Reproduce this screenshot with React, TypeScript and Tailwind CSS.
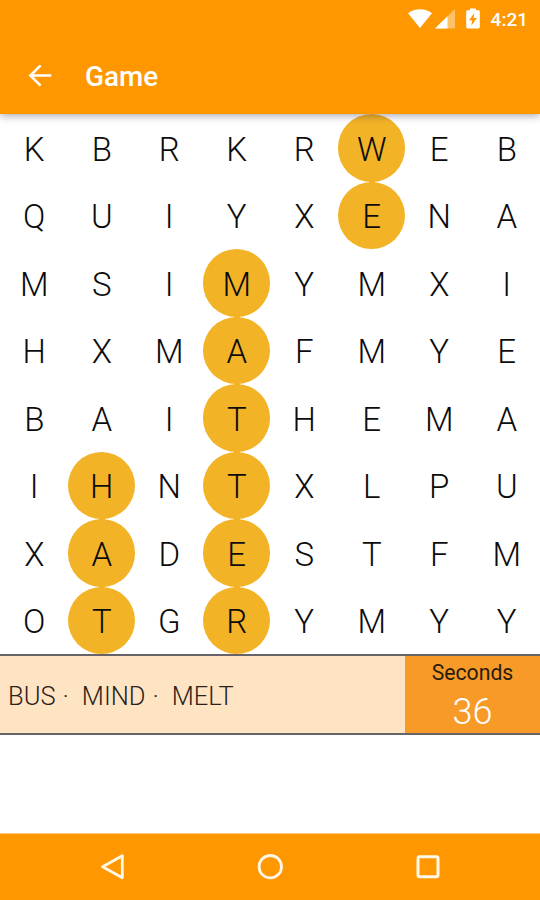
const ROWS = ['KBRKRWEB', 'QUIYXENA', 'MSIMYMXI', 'HXMAFMYE', 'BAITHEMA', 'IHNTXLPU', 'XADESTFM', 'OTGRYMYY'];

// "row,column" of every letter that belongs to a found word
const FOUND = new Set(['0,5', '1,5', '2,3', '3,3', '4,3', '5,3', '6,3', '7,3', '5,1', '6,1', '7,1']);

function StatusBar() {
  return (
    <div className="flex h-[37px] items-center justify-end pr-3 text-white">
      <svg width="73" height="24" viewBox="0 0 73 24" className="mr-[10px]" fill="currentColor">
        <path d="M0 6.2C3.5 3.6 7.5 2.2 12 2.2S20.5 3.6 24 6.2L12 21Z" />
        <path d="M47 2V21.4H27Z" opacity="0.4" />
        <path d="M39.5 9.3V21.4H27Z" />
        <path
          fillRule="evenodd"
          d="M62 1.4h6v1.8h2.5a1.3 1.3 0 0 1 1.3 1.3V20a1.4 1.4 0 0 1-1.4 1.4H59.6a1.4 1.4 0 0 1-1.4-1.4V4.5a1.3 1.3 0 0 1 1.3-1.3H62ZM66.4 6l-5.4 7.3h3.2l-.8 5.2 5.6-7.5h-3.4Z"
        />
      </svg>
      <span className="pt-[2px] text-[19px] leading-none font-medium">4:21</span>
    </div>
  );
}

function Header() {
  return (
    <header className="relative z-10 h-[114px] bg-[#ff9800] shadow-[0_2px_8px_rgba(50,40,70,0.4)]">
      <StatusBar />
      <div className="flex h-[77px] items-center pl-7 text-white">
        <svg width="24" height="24" viewBox="0 0 24 24" fill="none" stroke="currentColor" strokeWidth="2.6">
          <path d="M23.3 11.5H2.4M12.6 1.3L2.4 11.5L12.6 21.7" />
        </svg>
        <h1 className="ml-[33px] pt-[3px] text-[27.8px] leading-none font-medium">Game</h1>
      </div>
    </header>
  );
}

function Board() {
  return (
    <main className="grid h-[540px] grid-cols-8 grid-rows-8">
      {ROWS.flatMap((row, r) =>
        row.split('').map((letter, c) => {
          const found = FOUND.has(`${r},${c}`);
          const joined = FOUND.has(`${r + 1},${c}`);
          return (
            <div
              key={`${r}-${c}`}
              className={`relative flex items-center justify-center pt-[3px] pl-[1px] text-[33px] leading-none font-light text-[#0c0c0c] ${found ? 'rounded-full bg-[#f3b326]' : ''}`}
            >
              {found && joined && <span className="absolute -bottom-[2px] left-[31px] h-1 w-[6px] bg-[#f3b326]" />}
              {letter}
            </div>
          );
        }),
      )}
    </main>
  );
}

function WordPanel() {
  return (
    <section className="flex h-[81px] border-y-2 border-[#666468] bg-[#ffe4c4]">
      <div className="flex flex-1 items-center pt-[4px] pl-[8px] text-[25.5px] leading-none font-light whitespace-pre text-[#2a2118]">
        <span>BUS</span>
        <span className="ml-[7px]">·</span>
        <span className="ml-[13px]">MIND</span>
        <span className="ml-[7px]">·</span>
        <span className="ml-[13px]">MELT</span>
      </div>
      <div className="flex w-[135px] flex-col items-center bg-[#f79a28]">
        <span className="pt-[6px] text-[21.2px] leading-none text-[#2a1c0c]">Seconds</span>
        <span className="pt-[11px] text-[36px] leading-none font-light text-white">36</span>
      </div>
    </section>
  );
}

function NavigationBar() {
  return (
    <nav className="mt-auto grid h-[67px] grid-cols-[113px_1fr_113px] border-t border-[#ffc982] bg-[#ff9800] text-[#fff7e8]">
      <div className="flex items-center justify-end">
        <svg className="-mr-3" width="26" height="28" viewBox="0 0 26 28" fill="none" stroke="currentColor" strokeWidth="2.8" strokeLinejoin="round">
          <path d="M23.3 2.8V24.8L3.6 13.8Z" />
        </svg>
      </div>
      <div className="flex items-center justify-center">
        <svg width="28" height="28" viewBox="0 0 28 28" fill="none" stroke="currentColor" strokeWidth="2.8">
          <circle cx="14.3" cy="13.7" r="11.2" />
        </svg>
      </div>
      <div className="flex items-center">
        <svg className="-ml-3" width="26" height="26" viewBox="0 0 26 26" fill="none" stroke="currentColor" strokeWidth="3">
          <rect x="3" y="2.7" width="20" height="20" rx="1.5" />
        </svg>
      </div>
    </nav>
  );
}

export default function App() {
  return (
    <div className="flex h-[900px] w-[540px] flex-col overflow-hidden bg-white font-['Roboto',sans-serif]">
      <Header />
      <Board />
      <WordPanel />
      <NavigationBar />
    </div>
  );
}
